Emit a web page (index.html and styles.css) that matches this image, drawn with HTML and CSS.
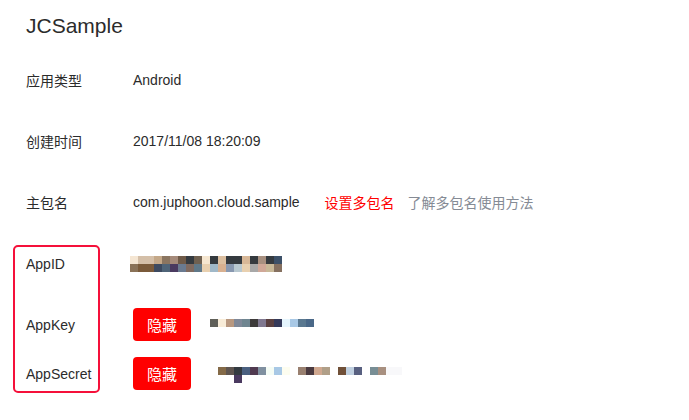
FILE: index.html
```html
<!DOCTYPE html>
<html lang="zh-CN">
<head>
<meta charset="utf-8">
<title>JCSample</title>
<link rel="stylesheet" href="styles.css">
</head>
<body>
<div class="page">
  <h1 class="title">JCSample</h1>
  <div class="info">
    <div class="row">
      <div class="label">应用类型</div>
      <div class="value">Android</div>
    </div>
    <div class="row">
      <div class="label">创建时间</div>
      <div class="value">2017/11/08 18:20:09</div>
    </div>
    <div class="row">
      <div class="label">主包名</div>
      <div class="value">com.juphoon.cloud.sample</div>
      <a class="link-red">设置多包名</a>
      <a class="link-gray">了解多包名使用方法</a>
    </div>
  </div>
  <div class="keys">
    <div class="keys-labels">
      <div class="krow krow-id">AppID</div>
      <div class="krow krow-key">AppKey</div>
      <div class="krow krow-secret">AppSecret</div>
    </div>
    <div class="keys-values">
      <div class="krow krow-id"><span class="mosaic mosaic-id"></span></div>
      <div class="krow krow-key"><button class="btn">隐藏</button><span class="mosaic mosaic-key"></span></div>
      <div class="krow krow-secret"><button class="btn">隐藏</button><span class="mosaic mosaic-secret"></span></div>
    </div>
  </div>
</div>
</body>
</html>
```

FILE: styles.css
```css
html, body {
  margin: 0;
  padding: 0;
  background: #fff;
}
body {
  font-family: "Liberation Sans", "Noto Sans CJK SC", sans-serif;
  color: #2b2b2b;
  font-size: 14px;
}
.page {
  width: 689px;
  height: 420px;
  overflow: hidden;
}
.title {
  margin: 12px 0 0 26px;
  font-size: 21px;
  line-height: 28px;
  font-weight: normal;
  color: #2b2b2b;
}
.info {
  margin-top: 9px;
}
.row {
  display: flex;
  align-items: center;
  height: 61px;
  padding-left: 26px;
}
.label {
  width: 107px;
  flex: none;
}
.value {
  flex: none;
}
.link-red {
  color: #ff0000;
  margin-left: 25px;
}
.link-gray {
  color: #858b95;
  margin-left: 13px;
}
.keys {
  display: flex;
  margin-top: 13px;
}
.keys-labels {
  margin-left: 13px;
  width: 72px;
  border: 2px solid #f5103a;
  border-radius: 5px;
  padding: 0 0 1px 11px;
}
.keys-values {
  padding-top: 2px;
  margin-left: 33px;
}
.krow {
  display: flex;
  align-items: center;
  height: 33px;
}
.krow-key {
  margin-top: 28px;
}
.krow-secret {
  margin-top: 16px;
}
.btn {
  width: 58px;
  height: 33px;
  border: none;
  border-radius: 4px;
  background: #ff0000;
  color: #fff;
  font-family: "Liberation Sans", "Noto Sans CJK SC", sans-serif;
  font-size: 15px;
  padding: 0;
}
.mosaic {
  display: block;
  background-repeat: no-repeat;
}
.mosaic-id {
  width: 152px;
  height: 16px;
  margin-left: -3px;
  background-image:
    linear-gradient(to right,
      #f5e6d3 0 8px, #d4bfa8 8px 24px, #c4a888 24px 32px, #8b7560 32px 40px,
      #a58a7a 40px 48px, #6f5a48 48px 56px, #343a40 56px 64px, #6f6050 64px 72px,
      #f5e6d0 72px 80px, #353a3f 80px 88px, #dcbfa0 88px 96px, #353a3f 96px 112px,
      #d8b898 112px 120px, #353a3f 120px 128px, #a89080 128px 136px, #353a3f 136px 144px,
      #3c5068 144px 152px),
    linear-gradient(to right,
      #8a7258 0 8px, #7a5a3a 8px 24px, #3d4a60 24px 32px, #4f6478 32px 40px,
      #4a3a60 40px 48px, #6a7a90 48px 56px, #806a60 56px 64px, #607888 64px 72px,
      #e8d0b0 72px 80px, #a0b8c8 80px 88px, #d8b090 88px 96px, #8898b0 96px 104px,
      #b8c8d0 104px 112px, #e8d0b0 112px 120px, #a8a8a8 120px 128px, #d0a898 128px 136px,
      #c8b898 136px 144px, #857060 144px 152px);
  background-size: 152px 8px, 152px 8px;
  background-position: 0 0, 0 8px;
}
.mosaic-key {
  width: 104px;
  height: 8px;
  margin-left: 19px;
  margin-bottom: 3px;
  background-image: linear-gradient(to right,
    #5f5f58 0 8px, #f8ecd8 8px 16px, #b89880 16px 24px, #7f8898 24px 32px,
    #6f8590 32px 40px, #3d3a3a 40px 48px, #807890 48px 56px, #5a4040 56px 64px,
    #353a5a 64px 72px, #e5f5fd 72px 80px, #a8c8e5 80px 88px, #5a7890 88px 96px,
    #4a6888 96px 104px);
}
.mosaic-secret {
  width: 184px;
  height: 16px;
  margin-left: 27px;
  margin-top: 3px;
  background-image:
    linear-gradient(to right,
      #846a48 0 8px, #5f5550 8px 16px, #333a40 16px 24px, #4a6080 24px 32px,
      #503a50 32px 40px, #8090a0 40px 48px, #f5fcf5 48px 56px, #a8c8e5 56px 64px,
      #fdfdf0 64px 72px, #ffffff 72px 80px, #998070 80px 88px, #4a3a40 88px 96px,
      #d0a890 96px 104px, #b09f88 104px 112px, #ffffff 112px 120px, #705038 120px 128px,
      #c0d0e0 128px 136px, #586080 136px 144px, #ffffff 144px 152px, #788e95 152px 160px,
      #a89080 160px 168px, #f8f8fa 168px 184px),
    linear-gradient(to right, #4a3a60 0 8px);
  background-size: 184px 8px, 8px 8px;
  background-position: 0 0, 16px 8px;
}
```
